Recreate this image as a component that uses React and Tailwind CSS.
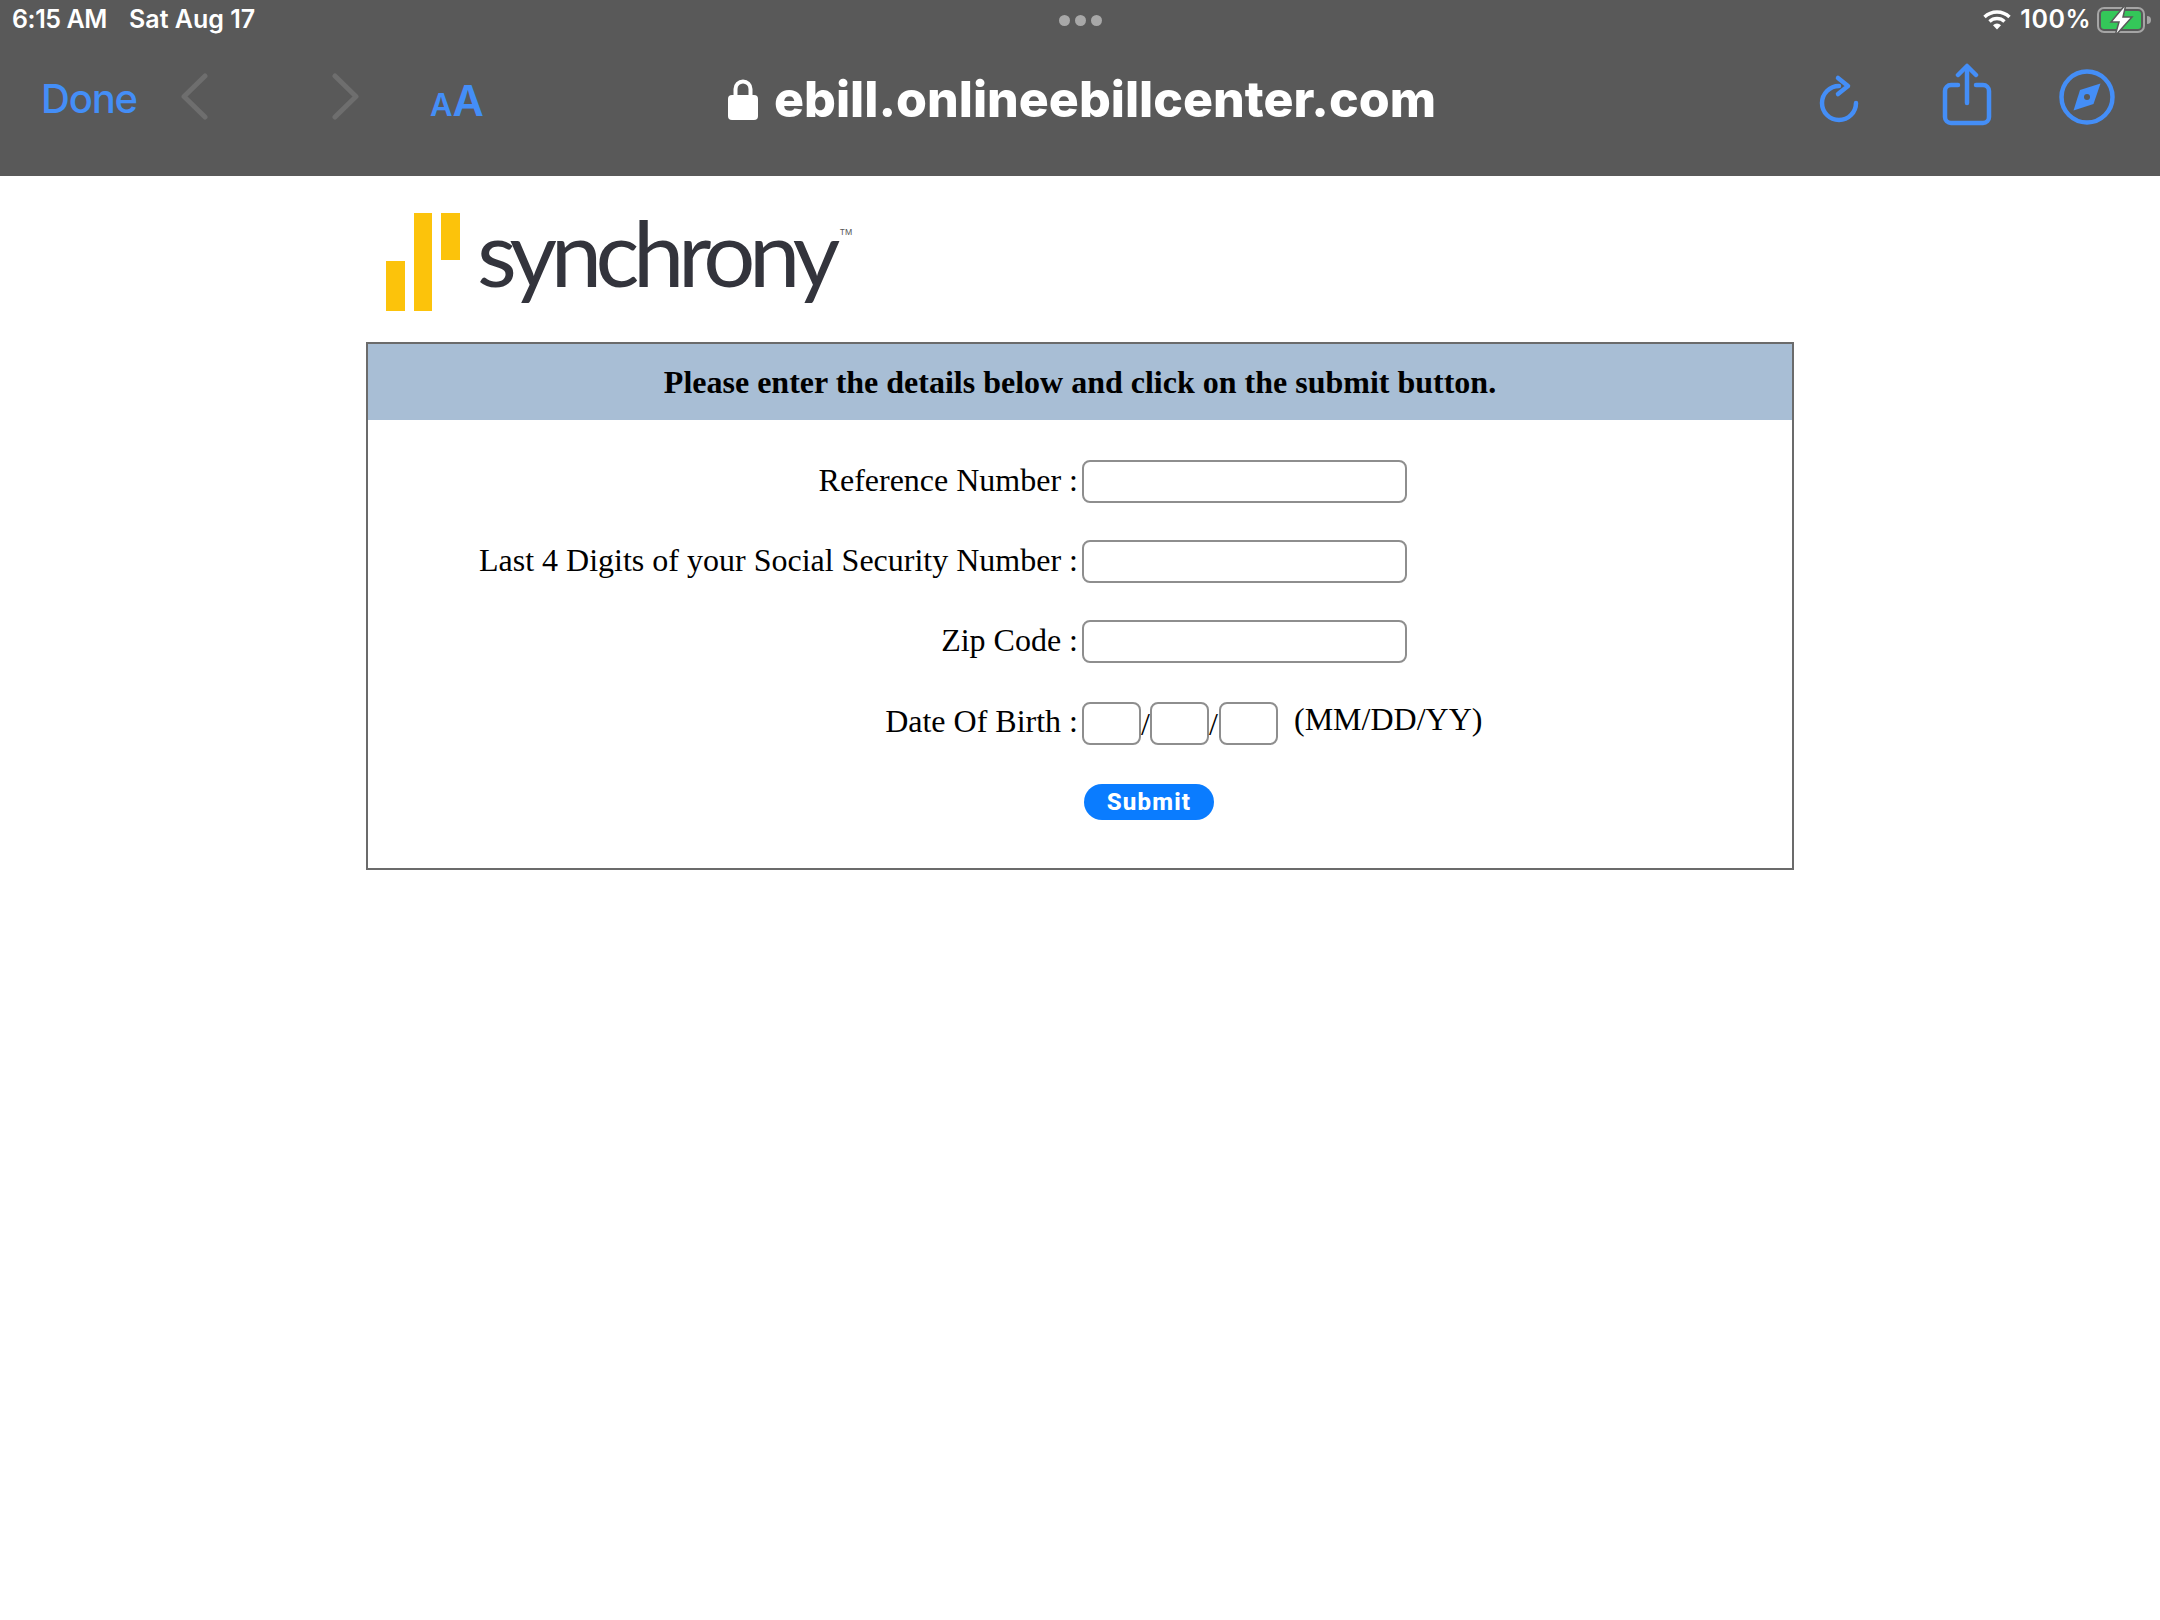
import React from 'react';

const blue = '#448ef7';

const Chevron = ({ flip }) => (
  <svg width="27" height="47" viewBox="0 0 27 47" fill="none" stroke="#6e6e6e" strokeWidth="5" strokeLinecap="round" strokeLinejoin="round">
    <path d={flip ? 'M3 3 L24 23.5 L3 44' : 'M24 3 L3 23.5 L24 44'} />
  </svg>
);

const Lock = () => (
  <svg width="30" height="42" viewBox="0 0 30 42">
    <path d="M7.5 18 V11 a7.5 7.5 0 0 1 15 0 V18" fill="none" stroke="#fff" strokeWidth="4" />
    <rect x="0" y="17" width="30" height="25" rx="4" fill="#fff" />
  </svg>
);

const Wifi = () => (
  <svg width="28" height="20" viewBox="0 0 28 20" fill="none" stroke="#fff" strokeWidth="3.4" className="mr-[3px]">
    <path d="M1.5 7 A18 18 0 0 1 26.5 7" />
    <path d="M6.5 11.5 A11 11 0 0 1 21.5 11.5" />
    <path d="M14 19.5 L10 15.2 A5.5 5.5 0 0 1 18 15.2 Z" fill="#fff" stroke="none" />
  </svg>
);

const Battery = () => (
  <svg width="54" height="32" viewBox="0 0 54 32">
    <rect x="1" y="4" width="46" height="24" rx="6" fill="none" stroke="#a5a5a5" strokeWidth="2" />
    <rect x="4" y="7" width="40" height="18" rx="3" fill="#34c759" />
    <path d="M50 12 a3 3 0 0 1 0 8 Z" fill="#a5a5a5" />
    <path d="M29 0 L14 18 H22 L18 32 L35 13 H26 Z" fill="#fff" stroke="#595959" strokeWidth="1.5" />
  </svg>
);

const Reload = () => (
  <svg width="42" height="50" viewBox="0 0 42 50" fill="none" stroke={blue} strokeWidth="4.5" strokeLinecap="round" strokeLinejoin="round">
    <path d="M38 29 A17 17 0 1 1 21 12" />
    <path d="M20 4 L30 12 L20 20" />
  </svg>
);

const Share = () => (
  <svg width="52" height="64" viewBox="0 0 52 64" fill="none" stroke={blue} strokeWidth="4.5" strokeLinecap="round" strokeLinejoin="round">
    <path d="M17 22 H10 a6 6 0 0 0 -6 6 V54 a6 6 0 0 0 6 6 H42 a6 6 0 0 0 6 -6 V28 a6 6 0 0 0 -6 -6 H35" />
    <path d="M26 40 V4" />
    <path d="M17 12 L26 3 L35 12" />
  </svg>
);

const Compass = () => (
  <svg width="56" height="56" viewBox="0 0 56 56">
    <circle cx="28" cy="28" r="25.5" fill="none" stroke={blue} strokeWidth="4.5" />
    <path d="M41.5 14.5 L34.5 35 L14.5 41.5 L21 21 Z" fill={blue} />
    <circle cx="28" cy="28" r="3" fill="#595959" />
  </svg>
);

const Field = ({ label, mt }) => (
  <div className={`flex items-center ${mt}`}>
    <label className="w-[714px] pr-[4px] mt-[-4px] text-right text-[32px] leading-none text-black whitespace-nowrap">{label}</label>
    <input className="w-[325px] h-[43px] rounded-[8px] border-2 border-[#8e8e8e] bg-white" />
  </div>
);

const SmallBox = () => (
  <input className="w-[59px] h-[43px] rounded-[8px] border-2 border-[#8e8e8e] bg-white" />
);

const App = () => {
  return (
    <div className="w-[2160px] h-[1620px] bg-white overflow-hidden font-['Liberation_Serif',serif]">
      {/* safari toolbar */}
      <header className="h-[176px] bg-[#595959] font-['Inter',sans-serif]">
        <div className="h-[40px] pl-[12px] pr-[9px] flex items-center text-white text-[25px] font-semibold">
          <div className="w-[1047px] flex gap-[22px]">
            <span className="tracking-[-0.4px]">6:15 AM</span>
            <span>Sat Aug 17</span>
          </div>
          <div className="flex gap-[5px]">
            <span className="w-[11px] h-[11px] rounded-full bg-[#a8a8a8]" />
            <span className="w-[11px] h-[11px] rounded-full bg-[#a8a8a8]" />
            <span className="w-[11px] h-[11px] rounded-full bg-[#a8a8a8]" />
          </div>
          <div className="flex-1 flex items-center justify-end gap-[6px]">
            <Wifi />
            <span className="tracking-[0.5px]">100%</span>
            <Battery />
          </div>
        </div>
        <div className="h-[118px] flex items-center">
          <div className="w-[728px] pl-[41px] flex items-center text-[#448ef7] shrink-0">
            <span className="text-[40px] font-medium w-[95px] tracking-[-1.2px]">Done</span>
            <span className="ml-[45px] mt-[-5px]"><Chevron /></span>
            <span className="ml-[124px] mt-[-5px]"><Chevron flip /></span>
            <span className="ml-[71px] font-semibold flex items-baseline mt-[2px]">
              <span className="text-[31px]">A</span>
              <span className="text-[43px]">A</span>
            </span>
          </div>
          <div className="flex items-center gap-[16px] text-white">
            <Lock />
            <span className="text-[50px] font-extrabold leading-none">ebill.onlineebillcenter.com</span>
          </div>
          <div className="flex-1 flex items-center justify-end pr-[45px]">
            <Reload />
            <span className="ml-[81px] mt-[-9px]"><Share /></span>
            <span className="ml-[66px] mt-[-5px]"><Compass /></span>
          </div>
        </div>
      </header>

      {/* logo */}
      <div className="pl-[386px] h-[166px] flex items-center">
        <svg width="75" height="98" viewBox="0 0 75 98" className="mt-[6px]">
          <rect x="0" y="48" width="19" height="50" fill="#fcc30b" />
          <rect x="28" y="0" width="18" height="98" fill="#fcc30b" />
          <rect x="55" y="0" width="19" height="47" fill="#fcc30b" />
        </svg>
        <span className="ml-[16px] mt-[-14px] font-['Lato',sans-serif] text-[92px] leading-none text-[#33343c] tracking-[-6.4px]">synchrony</span>
        <span className="ml-[6px] font-['Inter',sans-serif] text-[8px] text-[#555] self-start mt-[50px]">TM</span>
      </div>

      {/* form box */}
      <div className="ml-[366px] w-[1428px] h-[528px] border-2 border-[#6b6b6b]">
        <div className="h-[76px] bg-[#a8bed5] flex items-center justify-center text-[32px] font-bold text-black">
          Please enter the details below and click on the submit button.
        </div>
        <div className="pt-[40px]">
          <Field label="Reference Number :" />
          <Field label="Last 4 Digits of your Social Security Number :" mt="mt-[37px]" />
          <Field label="Zip Code :" mt="mt-[37px]" />
          <div className="flex items-center mt-[39px]">
            <label className="w-[714px] pr-[4px] mt-[-5px] text-right text-[32px] leading-none text-black">Date Of Birth :</label>
            <SmallBox />
            <span className="text-[32px] leading-none w-[9px]">/</span>
            <SmallBox />
            <span className="text-[32px] leading-none w-[10px]">/</span>
            <SmallBox />
            <span className="ml-[16px] mt-[-9px] text-[32px] leading-none text-black">(MM/DD/YY)</span>
          </div>
          <div className="pl-[716px] mt-[39px]">
            <button className="w-[130px] h-[36px] rounded-full bg-[#0a7cff] text-white text-[24px] font-['Roboto',sans-serif] font-extrabold tracking-[1.2px] leading-none">Submit</button>
          </div>
        </div>
      </div>
    </div>
  );
};

export default App;
